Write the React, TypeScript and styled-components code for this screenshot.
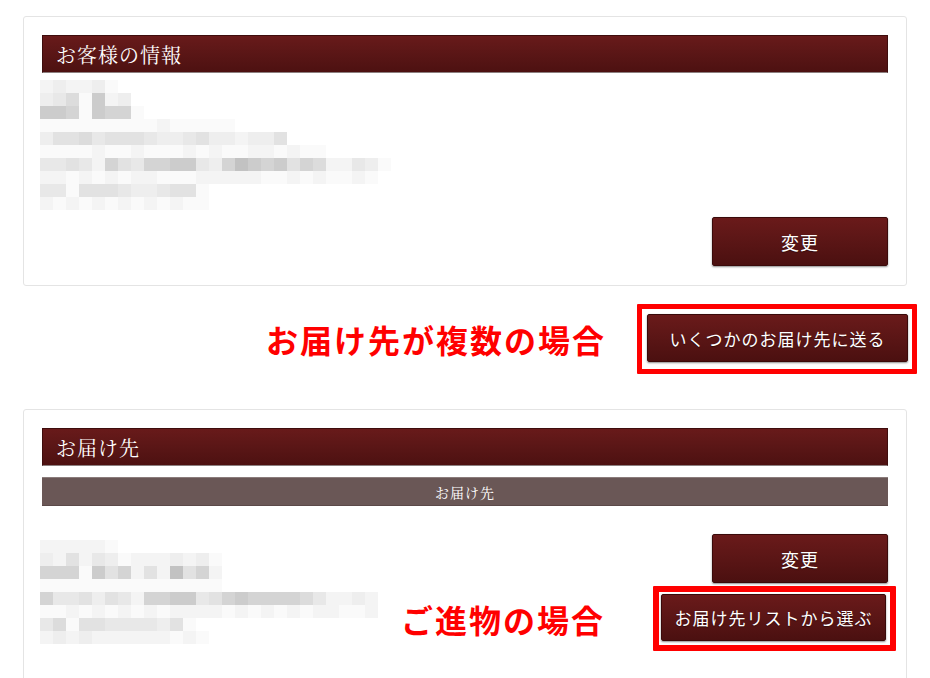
import React from 'react'
import styled, { createGlobalStyle } from 'styled-components'

const GlobalStyle = createGlobalStyle`
  html, body {
    margin: 0;
    padding: 0;
    background: #fff;
  }
  body {
    font-family: 'Noto Sans CJK JP', 'Noto Sans', sans-serif;
  }
`

// pixelated (mosaic) personal info, one digit per 13px cell, 0 = white .. 9 = darkest
const shades = ['#ffffff', '#fafafa', '#f4f4f4', '#eeeeee', '#e8e8e8', '#e2e2e2', '#dcdcdc', '#d4d4d4', '#cccccc', '#c2c2c2']

const customerRows = [
  '232231',
  '3461823',
  '88718771',
  '111111111211111',
  '3556455543345332335',
  '1111211211121211221211',
  '445427547788437987857622431',
  '22121212211122222112121121',
  '4415554334551',
  '2121212121211',
]

const addressRows = [
  '222221',
  '32524312223231',
  '77718572529572',
  '11111111111111',
  '74453542778845787777642232',
  '11212121212222121212122112',
  '461554444351',
  '2323222222121',
]

const Page = styled.div`
  display: flex;
  flex-direction: column;
  padding: 16px 23px 0;
`

const Card = styled.section`
  display: flex;
  flex-direction: column;
  background: #fff;
  border: 1px solid #e4e4e4;
  border-radius: 3px;
  padding: 18px 18px 19px;
`

const OpenCard = styled(Card)`
  padding-bottom: 60px;
`

const SectionHeader = styled.h2`
  margin: 0;
  height: 38px;
  box-sizing: border-box;
  display: flex;
  align-items: center;
  padding: 0 13px;
  background: linear-gradient(180deg, #681a1a 0%, #5a1616 50%, #4d1111 100%);
  border: 1px solid #3e0d0d;
  border-bottom-color: #8c7f7f;
  color: #fff;
  font-family: 'Noto Serif CJK JP', 'Noto Sans CJK JP', serif;
  font-size: 20px;
  font-weight: 400;
  letter-spacing: 1px;
`

const SubBar = styled.div`
  margin-top: 11px;
  height: 29px;
  box-sizing: border-box;
  display: flex;
  align-items: center;
  justify-content: center;
  background: #6a5756;
  border-top: 1px solid #8a7c7b;
  border-bottom: 1px solid #5b4948;
  color: #fff;
  font-family: 'Noto Serif CJK JP', 'Noto Sans CJK JP', serif;
  font-size: 14px;
  letter-spacing: 1px;
`

const Mosaic = styled.div<{ $top: number }>`
  display: flex;
  flex-direction: column;
  margin: ${({ $top }) => $top}px 0 0 -2px;
`

const MosaicRow = styled.div`
  display: flex;
  height: 13px;
`

const Cell = styled.span<{ $level: number }>`
  width: 13px;
  height: 13px;
  background: ${({ $level }) => shades[$level]};
`

const ActionRow = styled.div`
  display: flex;
  justify-content: flex-end;
  margin-top: 7px;
`

const DarkButton = styled.button<{ $w: number; $h: number; $size: number }>`
  width: ${({ $w }) => $w}px;
  height: ${({ $h }) => $h}px;
  padding: 0;
  background: linear-gradient(180deg, #6a1a1a 0%, #5c1616 45%, #4b1010 100%);
  border: 1px solid #3a0a0a;
  border-radius: 2px;
  box-shadow: 0 1px 2px rgba(0, 0, 0, 0.45);
  color: #fff;
  font-family: 'Noto Sans CJK JP', sans-serif;
  font-size: ${({ $size }) => $size}px;
  letter-spacing: 1px;
  text-shadow: 0 1px 1px rgba(0, 0, 0, 0.4);
  cursor: pointer;
`

const Annotation = styled.div<{ $gap: number; $top: number; $right: number }>`
  display: flex;
  align-items: center;
  justify-content: flex-end;
  gap: ${({ $gap }) => $gap}px;
  margin-top: ${({ $top }) => $top}px;
  margin-right: -${({ $right }) => $right}px;
`

const Callout = styled.span`
  color: #ff0000;
  font-family: 'Noto Sans CJK JP', sans-serif;
  font-size: 32px;
  font-weight: 700;
  letter-spacing: 2px;
  line-height: 1;
`

const RedFrame = styled.div<{ $border: number; $pad: string }>`
  display: flex;
  border: ${({ $border }) => $border}px solid #ff0000;
  padding: ${({ $pad }) => $pad};
  border-radius: 1px;
`

const CardBody = styled.div`
  display: flex;
  justify-content: space-between;
  align-items: flex-start;
  margin-top: 28px;
`

const SideActions = styled.div`
  display: flex;
  flex-direction: column;
  align-items: flex-end;
`

const Spacer = styled.div`
  height: 35px;
`

function Pixelated({ rows, top }: { rows: string[]; top: number }) {
  return (
    <Mosaic $top={top} aria-hidden>
      {rows.map((row, i) => (
        <MosaicRow key={i}>
          {row.split('').map((d, j) => (
            <Cell key={j} $level={Number(d)} />
          ))}
        </MosaicRow>
      ))}
    </Mosaic>
  )
}

export default function App() {
  return (
    <>
      <GlobalStyle />
      <Page>
        <Card>
          <SectionHeader>お客様の情報</SectionHeader>
          <Pixelated rows={customerRows} top={7} />
          <ActionRow>
            <DarkButton $w={176} $h={49} $size={18}>変更</DarkButton>
          </ActionRow>
        </Card>

        <Annotation $gap={31} $top={18} $right={10}>
          <Callout>お届け先が複数の場合</Callout>
          <RedFrame $border={5} $pad="5px 4px 7px 5px">
            <DarkButton $w={261} $h={48} $size={17}>いくつかのお届け先に送る</DarkButton>
          </RedFrame>
        </Annotation>

        <Spacer />

        <OpenCard>
          <SectionHeader>お届け先</SectionHeader>
          <SubBar>お届け先</SubBar>
          <CardBody>
            <Pixelated rows={addressRows} top={6} />
            <SideActions>
              <DarkButton $w={176} $h={49} $size={18}>変更</DarkButton>
              <Annotation $gap={48} $top={3} $right={8}>
                <Callout>ご進物の場合</Callout>
                <RedFrame $border={6} $pad="2px 4px 4px 2px">
                  <DarkButton $w={225} $h={47} $size={17}>お届け先リストから選ぶ</DarkButton>
                </RedFrame>
              </Annotation>
            </SideActions>
          </CardBody>
        </OpenCard>
      </Page>
    </>
  )
}
